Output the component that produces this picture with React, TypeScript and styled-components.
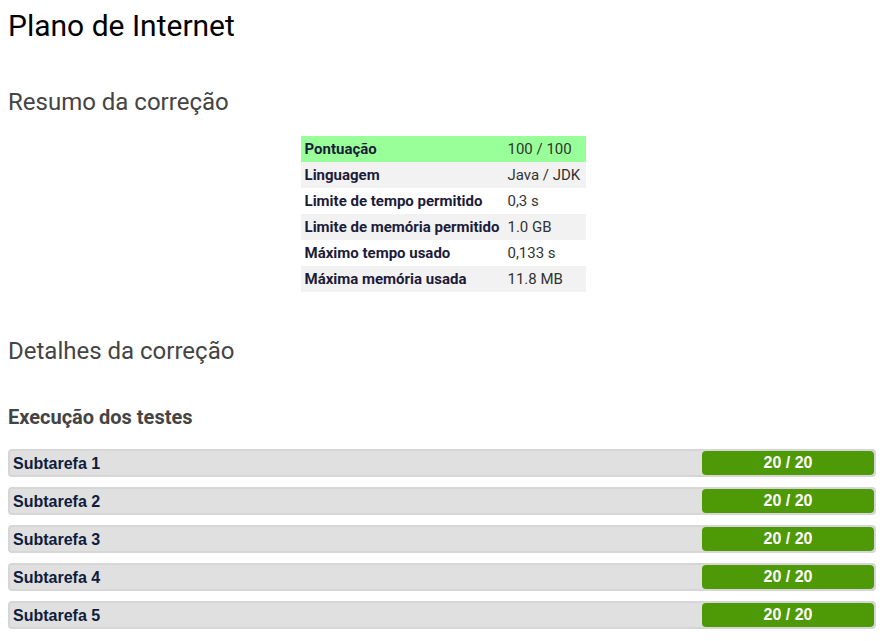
import React from "react";
import styled, { createGlobalStyle } from "styled-components";

const Global = createGlobalStyle`
  html, body { margin: 0; padding: 0; background: #fff; }
  body { padding: 8px; font-family: Roboto, "Liberation Sans", Arial, sans-serif; }
`;

const Title = styled.h1`
  margin: 0;
  font-size: 30px;
  line-height: 36px;
  font-weight: 400;
  color: #000;
`;

const SectionTitle = styled.h2<{ $top: number }>`
  margin: ${(p) => p.$top}px 0 0 0;
  font-size: 24px;
  line-height: 28px;
  font-weight: 400;
  color: #444;
`;

const SubTitle = styled.h3`
  margin: 40px 0 0 0;
  font-size: 20px;
  line-height: 24px;
  font-weight: 700;
  color: #444;
`;

const Table = styled.table`
  margin: 20px auto 0;
  border-collapse: collapse;
  font-size: 15px;
  line-height: 18px;
`;

const Row = styled.tr<{ $bg: string }>`
  background: ${(p) => p.$bg};
`;

const Label = styled.td`
  padding: 4px 4px;
  font-weight: 700;
  color: #1c1c3a;
  white-space: nowrap;
`;

const Value = styled.td`
  padding: 4px 4px;
  color: #333;
  white-space: nowrap;
  width: 75px;
`;

const Bars = styled.div`
  margin: 20px 3px 0 0;
  display: flex;
  flex-direction: column;
  gap: 10px;
`;

const Bar = styled.div`
  display: flex;
  align-items: center;
  justify-content: space-between;
  height: 24px;
  background: #e0e0e0;
  border: 2px solid #d6d6d6;
  border-radius: 4px;
  font-family: "Liberation Sans", Arial, sans-serif;
`;

const BarLabel = styled.span`
  padding-left: 3px;
  padding-top: 1px;
  font-size: 16px;
  font-weight: 700;
  color: #0e1c3e;
`;

const Score = styled.span`
  width: 172px;
  height: 24px;
  background: #4e9a06;
  border-radius: 4px;
  color: #fff;
  font-size: 16px;
  font-weight: 700;
  display: flex;
  align-items: center;
  justify-content: center;
  padding-bottom: 1px;
  box-sizing: border-box;
`;

const rows: [string, string][] = [
  ["Pontuação", "100 / 100"],
  ["Linguagem", "Java / JDK"],
  ["Limite de tempo permitido", "0,3 s"],
  ["Limite de memória permitido", "1.0 GB"],
  ["Máximo tempo usado", "0,133 s"],
  ["Máxima memória usada", "11.8 MB"],
];

export default function App() {
  return (
    <>
      <Global />
      <Title>Plano de Internet</Title>
      <SectionTitle $top={44}>Resumo da correção</SectionTitle>
      <Table>
        <tbody>
          {rows.map(([l, v], i) => (
            <Row key={l} $bg={i === 0 ? "#99ff99" : i % 2 === 1 ? "#f2f2f2" : "#ffffff"}>
              <Label>{l}</Label>
              <Value>{v}</Value>
            </Row>
          ))}
        </tbody>
      </Table>
      <SectionTitle $top={45}>Detalhes da correção</SectionTitle>
      <SubTitle>Execução dos testes</SubTitle>
      <Bars>
        {[1, 2, 3, 4, 5].map((n) => (
          <Bar key={n}>
            <BarLabel>Subtarefa {n}</BarLabel>
            <Score>20 / 20</Score>
          </Bar>
        ))}
      </Bars>
    </>
  );
}
